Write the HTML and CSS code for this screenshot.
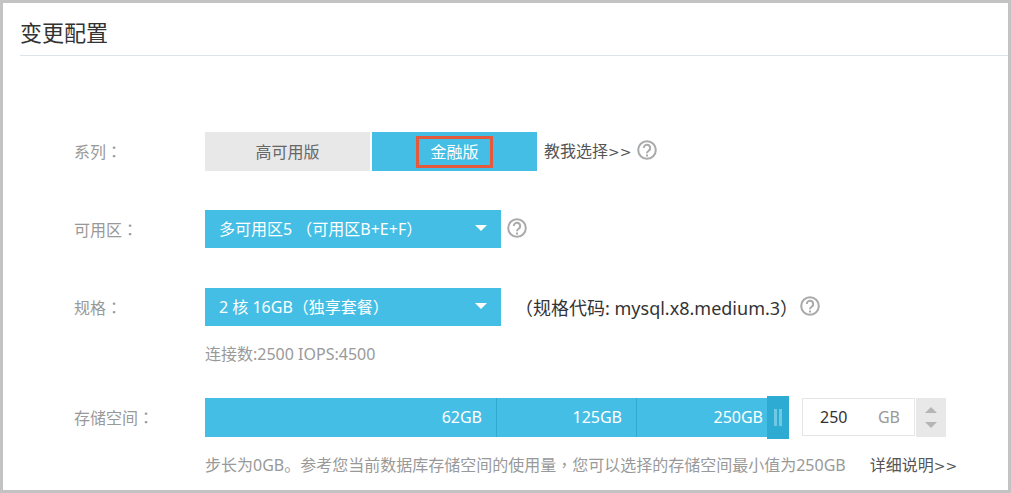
FILE: index.html
```html
<!DOCTYPE html>
<html lang="zh-CN">
<head>
<meta charset="utf-8">
<meta name="viewport" content="width=device-width, initial-scale=1">
<title>变更配置</title>
<link rel="stylesheet" href="styles.css">
</head>
<body>
<main class="page">
  <h1 class="page-title">变更配置</h1>
  <form class="config">
    <div class="row">
      <span class="label" id="series-label">系列<span class="mid" lang="zh-TW">：</span></span>
      <div class="field" role="group" aria-labelledby="series-label">
        <div class="options">
          <button type="button" class="option">高可用版</button>
          <button type="button" class="option selected" aria-pressed="true"><span class="marked">金融版</span></button>
        </div>
        <a class="link" href="#series-guide">教我选择<span class="more">&gt;&gt;</span></a>
        <button type="button" class="help" aria-label="系列帮助"><svg viewBox="0 0 20 20"><circle cx="10" cy="10" r="8.8"/><path d="M6.8 8a3.200 3.200 0 1 1 5.200 2.400c-1.300 1-2 1.500-2 2.900"/><path d="M10 14.500v1.900"/></svg></button>
      </div>
    </div>

    <div class="row">
      <label class="label" for="zone">可用区<span class="mid" lang="zh-TW">：</span></label>
      <div class="field">
        <div class="select">
          <select id="zone"><option>多可用区5 （可用区B+E+F）</option></select>
        </div>
        <button type="button" class="help" aria-label="可用区帮助"><svg viewBox="0 0 20 20"><circle cx="10" cy="10" r="8.8"/><path d="M6.8 8a3.200 3.200 0 1 1 5.200 2.400c-1.300 1-2 1.500-2 2.900"/><path d="M10 14.500v1.900"/></svg></button>
      </div>
    </div>

    <div class="row spec">
      <label class="label" for="spec">规格<span class="mid" lang="zh-TW">：</span></label>
      <div class="field">
        <div class="select">
          <select id="spec"><option>2 核 16GB（独享套餐）</option></select>
        </div>
        <span class="code"><span class="mid" lang="zh-TW">（</span>规格代码: mysql.x8.medium.3<span class="mid" lang="zh-TW">）</span></span>
        <button type="button" class="help" aria-label="规格帮助"><svg viewBox="0 0 20 20"><circle cx="10" cy="10" r="8.8"/><path d="M6.8 8a3.200 3.200 0 1 1 5.200 2.400c-1.300 1-2 1.500-2 2.900"/><path d="M10 14.500v1.900"/></svg></button>
      </div>
      <p class="note">连接数:2500 IOPS:4500</p>
    </div>

    <div class="row">
      <label class="label" for="size">存储空间<span class="mid" lang="zh-TW">：</span></label>
      <div class="field">
        <div class="slider">
          <span class="segment">62GB</span>
          <span class="segment">125GB</span>
          <span class="segment">250GB</span>
          <input class="range" type="range" min="0" max="250" value="250" aria-label="存储空间滑块">
        </div>
        <div class="amount">
          <input id="size" type="text" inputmode="numeric" value="250">
          <span class="unit">GB</span>
        </div>
        <div class="stepper">
          <button type="button" class="step up" aria-label="增加"></button>
          <button type="button" class="step down" aria-label="减少"></button>
        </div>
      </div>
      <p class="note">步长为0GB。参考您当前数据库存储空间的使用量<span class="mid" lang="zh-TW">，</span>您可以选择的存储空间最小值为250GB<a class="link detail" href="#storage-guide">详细说明<span class="more">&gt;&gt;</span></a></p>
    </div>
  </form>
</main>
</body>
</html>
```

FILE: styles.css
```css
* {
  box-sizing: border-box;
}

body {
  margin: 0;
  color: #333;
  background: #fff;
  font: 16px/24px "Noto Sans", "Noto Sans CJK SC", sans-serif;
}

button,
input,
select {
  margin: 0;
  padding: 0;
  border: 0;
  border-radius: 0;
  background: none;
  color: inherit;
  font: inherit;
}

.page {
  min-height: 100vh;
  padding-left: 17px;
  border: 3px solid #c3c3c3;
}

.page-title {
  margin: 0;
  padding: 13px 0 7px;
  border-bottom: 1px solid #dde4e9;
  font-size: 22px;
  font-weight: 400;
  line-height: 32px;
}

.config {
  padding: 76px 8px 0 54px;
}

.row {
  display: grid;
  grid-template-columns: 131px minmax(0, 1fr);
  align-items: center;
  margin-bottom: 39px;
}

.row.spec {
  margin-bottom: 32px;
}

.row:last-child {
  margin-bottom: 0;
}

.label,
.note {
  color: #999;
}

.mid {
  font-family: "Noto Sans CJK TC", sans-serif;
}

.field {
  display: flex;
  align-items: center;
  min-height: 39px;
}

.options {
  display: flex;
  gap: 2px;
  margin-right: 7px;
}

.option {
  width: 165px;
  height: 39px;
  background: #e8e8e8;
  color: #666;
}

.option.selected {
  background: #44bee4;
  color: #fff;
}

.marked {
  display: inline-block;
  padding: 1px 11px;
  border: 3px solid #e5593c;
}

.link {
  color: #555;
  text-decoration: none;
}

.more {
  font-family: "DejaVu Sans", sans-serif;
  font-size: 14px;
}

.help {
  width: 20px;
  height: 20px;
  margin: 0 0 4px 6px;
}

.help svg {
  display: block;
  fill: none;
  stroke: #aaa;
  stroke-width: 2;
}

.select {
  position: relative;
  align-self: flex-start;
  width: 296px;
  background: #44bee4;
  color: #fff;
}

.select select {
  display: block;
  width: 100%;
  height: 38px;
  padding: 0 40px 0 14px;
  appearance: none;
}

.select::after {
  position: absolute;
  top: 15px;
  right: 14px;
  border: 6px solid transparent;
  border-top-color: #fff;
  border-bottom: 0;
  content: "";
}

.code {
  margin-left: 14px;
  font-size: 18px;
}

.spec .help {
  margin-left: 2px;
}

.note {
  grid-column: 2;
  margin: 15px 0 0;
}

.slider {
  position: relative;
  display: flex;
  width: 584px;
  background: #44bee4;
  color: #fff;
  line-height: 39px;
  text-align: right;
}

.segment {
  flex: 0 0 140px;
  padding-right: 14px;
  border-right: 1px solid #2dabd2;
}

.segment:first-child {
  flex-basis: 292px;
}

.segment:nth-child(3) {
  flex: 1;
  padding-right: 26px;
  border: 0;
}

.range {
  position: absolute;
  inset: -2px 0;
  width: 100%;
  height: 43px;
  appearance: none;
}

.range::-webkit-slider-thumb {
  width: 22px;
  height: 43px;
  background:
    linear-gradient(#6fc9e3, #6fc9e3) 7px 13px / 3px 17px no-repeat,
    linear-gradient(#6fc9e3, #6fc9e3) 12px 13px / 3px 17px no-repeat,
    #2dabd2;
  appearance: none;
}

.amount {
  display: flex;
  align-items: center;
  align-self: flex-start;
  width: 113px;
  height: 38px;
  margin: 0 1px 0 13px;
  padding: 0 14px 0 17px;
  border: 1px solid #e5e5e5;
}

.amount input {
  flex: 1;
  min-width: 0;
}

.unit {
  color: #999;
}

.stepper {
  display: flex;
  flex-direction: column;
  justify-content: center;
  gap: 2px;
  width: 30px;
  height: 39px;
  background: #e8e8e8;
}

.step {
  display: grid;
  height: 13px;
  place-items: center;
}

.step::before {
  border: 6px solid transparent;
  content: "";
}

.up::before {
  border-top: 0;
  border-bottom-color: #b5b5b5;
}

.down::before {
  border-bottom: 0;
  border-top-color: #b5b5b5;
}

.detail {
  margin-left: 24px;
}
```
